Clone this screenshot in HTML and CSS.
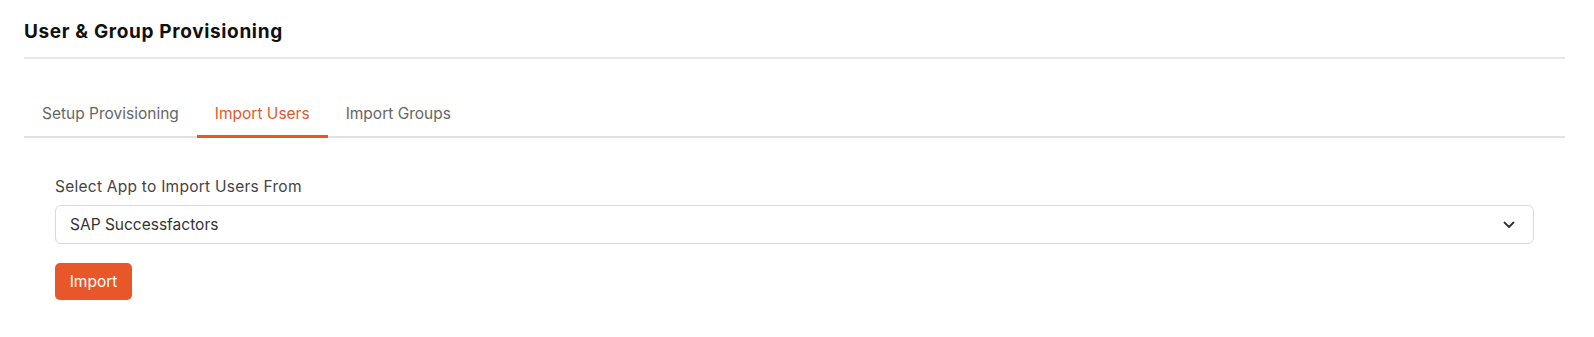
FILE: index.html
```html
<!DOCTYPE html>
<html>
<head>
<meta charset="utf-8">
<link rel="stylesheet" href="styles.css">
</head>
<body>
<div class="page">
  <h1 class="title">User &amp; Group Provisioning</h1>
  <div class="tabs">
    <div class="tab">Setup Provisioning</div>
    <div class="tab active">Import Users</div>
    <div class="tab">Import Groups</div>
  </div>
  <div class="content">
    <label class="label">Select App to Import Users From</label>
    <div class="select">
      <span>SAP Successfactors</span>
      <svg class="chev" width="12" height="8" viewBox="0 0 12 8"><path d="M1.5 1.5 L6 6 L10.5 1.5" fill="none" stroke="#333" stroke-width="1.8" stroke-linecap="round" stroke-linejoin="round"/></svg>
    </div>
    <button class="btn">Import</button>
  </div>
</div>
</body>
</html>
```
FILE: styles.css
```css
html, body { margin: 0; padding: 0; background: #fff; }
body { font-family: "Inter", "Open Sans", sans-serif; }
.page { padding: 0 29px 0 24px; }
.title {
  margin: 0;
  padding-top: 19px;
  height: 38px;
  font-size: 19px;
  font-weight: 700;
  color: #111;
  line-height: 26px;
  letter-spacing: 0.65px;
  border-bottom: 2px solid #e6e6e6;
}
.tabs {
  display: flex;
  margin-top: 39px;
  border-bottom: 2px solid #e2e2e2;
}
.tab {
  padding: 0 18px;
  height: 40px;
  line-height: 32px;
  font-size: 15.5px;
  color: #666;
  margin-bottom: -2px;
  border-bottom: 3px solid transparent;
  box-sizing: border-box;
}
.tab.active { color: #e8572a; border-bottom-color: #e8572a; }
.content { padding: 39px 31px 0 31px; }
.label { display: block; font-size: 15.5px; letter-spacing: 0.25px; color: #444; line-height: 20px; }
.select {
  margin-top: 8px;
  height: 39px;
  box-sizing: border-box;
  border: 1px solid #d9d9d9;
  border-radius: 6px;
  display: flex;
  align-items: center;
  justify-content: space-between;
  padding: 0 18px 0 14px;
  font-size: 15.5px;
  color: #333;
}
.btn {
  margin-top: 19px;
  height: 37px;
  width: 77px;
  border: none;
  border-radius: 5px;
  background: #e8572a;
  color: #fff;
  font-family: inherit;
  font-size: 15.5px;
  padding: 0;
}
```
